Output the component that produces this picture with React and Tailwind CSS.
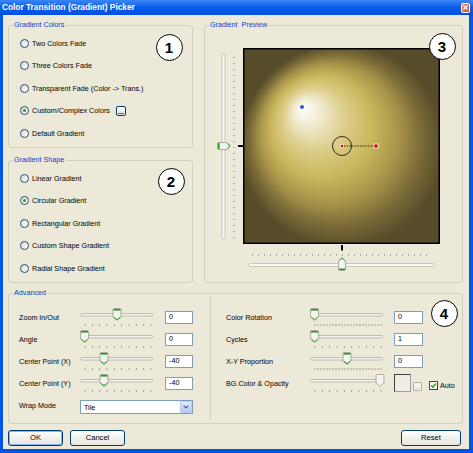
const GREEN = '#21A121'

function Radio({ checked }) {
  return (
    <span className="w-[9px] h-[9px] rounded-full border border-[#1C5180] bg-gradient-to-br from-[#DCDCD3] to-white flex items-center justify-center shrink-0">
      {checked && <span className="w-[3px] h-[3px] rounded-full bg-[#21A121]" />}
    </span>
  )
}

function RadioRow({ label, checked, children }) {
  return (
    <div className="h-[22.5px] flex items-center pl-[11px] gap-[3px]">
      <Radio checked={checked} />
      <span>{label}</span>
      {children}
    </div>
  )
}

function Group({ title, className = '', children }) {
  return (
    <fieldset className={`border border-[#D0D0BF] rounded-[3px] ${className}`}>
      <legend className="ml-[4px] px-[1px] text-[#0046D5] leading-[10px]">{title}</legend>
      {children}
    </fieldset>
  )
}

function Badge({ n, className }) {
  return (
    <div
      className={`absolute w-[27px] h-[27px] rounded-full bg-white border-[1.5px] border-black flex items-center justify-center text-[15px] font-bold leading-none ${className}`}
    >
      {n}
    </div>
  )
}

function ThumbDown({ x, green = true }) {
  return (
    <g transform={`translate(${x - 4.5},2)`}>
      <path
        d="M0.5,1.5 Q0.5,0.5 1.5,0.5 H7.5 Q8.5,0.5 8.5,1.5 V9 L4.5,12.5 L0.5,9 Z"
        fill="#F4F3EE"
        stroke="#9A9A94"
        strokeWidth="0.8"
      />
      {green && <rect x="1" y="1" width="7" height="1.6" fill={GREEN} />}
      {green && <path d="M1.3,9.2 L4.5,11.7 L7.7,9.2" fill="none" stroke={GREEN} strokeWidth="1" />}
    </g>
  )
}

function HSlider({ thumb, ticks = 10, green = true }) {
  const t = []
  for (let i = 0; i < ticks; i++) t.push(5 + (66 / (ticks - 1)) * i)
  return (
    <svg width="73" height="22" className="shrink-0 overflow-visible">
      <rect x="0.5" y="7.5" width="72" height="2.5" rx="1" fill="#F2F2EE" stroke="#ACA899" strokeWidth="0.7" />
      {t.map((x, i) => (
        <rect key={i} x={x - 0.4} y="18" width="0.8" height="2" fill="#8E8E86" />
      ))}
      <ThumbDown x={thumb} green={green} />
    </svg>
  )
}

function TextBox({ value }) {
  return (
    <div className="h-[13px] border border-[#7F9DB9] bg-white flex items-center pl-[3px] leading-none shrink-0 w-full">
      {value}
    </div>
  )
}

function XpButton({ label, def, className = '' }) {
  return (
    <button
      className={`h-[16px] rounded-[3px] border border-[#003C74] bg-gradient-to-b from-white to-[#E6E5DC] flex items-center justify-center leading-none text-[7.6px] ${
        def ? 'shadow-[inset_0_0_0_1px_#8CB4F2]' : ''
      } ${className}`}
    >
      {label}
    </button>
  )
}

function VerticalSlider() {
  const t = []
  for (let y = 9; y <= 189; y += 6) t.push(y)
  return (
    <svg width="30" height="196" className="shrink-0">
      <rect x="9" y="6" width="3" height="185" rx="1" fill="#F7F7F4" stroke="#B9B6A8" strokeWidth="0.7" />
      {t.map((y) => (
        <rect key={y} x="20" y={y} width="2" height="0.8" fill="#9A9A92" />
      ))}
      <g transform="translate(4,94)">
        <path d="M0.5,1.5 Q0.5,0.5 1.5,0.5 H10 L13.5,4 L10,7.5 H1.5 Q0.5,7.5 0.5,6.5 Z" fill="#F4F3EE" stroke="#9A9A94" strokeWidth="0.8" />
        <rect x="1" y="1" width="1.6" height="6" fill={GREEN} />
        <path d="M10.2,1.3 L12.7,4 L10.2,6.7" fill="none" stroke={GREEN} strokeWidth="1" />
      </g>
      <rect x="25" y="97" width="5" height="2" fill="#000" />
    </svg>
  )
}

function BottomSlider() {
  const t = []
  for (let x = 9; x <= 188; x += 6) t.push(x)
  return (
    <svg width="197" height="30" className="block">
      <rect x="98" y="1" width="2" height="5.5" fill="#000" />
      {t.map((x) => (
        <rect key={x} x={x} y="10" width="0.8" height="2" fill="#9A9A92" />
      ))}
      <rect x="6" y="19.5" width="185" height="3" rx="1" fill="#F7F7F4" stroke="#B9B6A8" strokeWidth="0.7" />
      <g transform="translate(95,13)">
        <path d="M0.5,4 L4,0.5 L7.5,4 V12.5 Q7.5,13.5 6.5,13.5 H1.5 Q0.5,13.5 0.5,12.5 Z" fill="#F4F3EE" stroke="#9A9A94" strokeWidth="0.8" />
        <rect x="1" y="11.5" width="6" height="1.6" fill={GREEN} />
        <path d="M1.2,3.8 L4,1.2 L6.8,3.8" fill="none" stroke={GREEN} strokeWidth="0.8" />
      </g>
    </svg>
  )
}

function Preview() {
  return (
    <svg width="197" height="196" className="shrink-0 block">
      <defs>
        <radialGradient id="g" gradientUnits="userSpaceOnUse" cx="99" cy="98" r="102" fx="59" fy="59">
          <stop offset="0" stopColor="#FFFFFF" />
          <stop offset="0.1" stopColor="#F4F0DD" />
          <stop offset="0.3" stopColor="#DDCF8C" />
          <stop offset="0.5" stopColor="#C9B75C" />
          <stop offset="0.68" stopColor="#A8954A" />
          <stop offset="0.84" stopColor="#7A6B38" />
          <stop offset="1" stopColor="#574C2A" />
        </radialGradient>
      </defs>
      <rect x="0" y="0" width="197" height="196" fill="url(#g)" />
      <rect x="0.75" y="0.75" width="195.5" height="194.5" fill="none" stroke="#000" strokeWidth="1.5" />
      <circle cx="59" cy="59" r="2" fill="#2A5CC8" />
      <circle cx="99" cy="98" r="9.5" fill="none" stroke="#000" strokeWidth="0.8" />
      <line x1="101" y1="98" x2="131" y2="98" stroke="#000" strokeWidth="0.8" strokeDasharray="1.5 1.2" />
      <rect x="97.5" y="96.5" width="3" height="3" fill="#E00000" stroke="#fff" strokeWidth="0.6" />
      <rect x="131" y="96" width="4" height="4" fill="#D00000" stroke="#fff" strokeWidth="0.8" />
    </svg>
  )
}

function AdvRow({ label, children, labelW }) {
  return (
    <div className="h-[22px] flex items-center">
      <span className={`${labelW} shrink-0`}>{label}</span>
      {children}
    </div>
  )
}

export default function App() {
  return (
    <div className="w-[473px] h-[453px] bg-[#0055E5] flex flex-col relative font-['Liberation_Sans',Arial,sans-serif] text-[7.2px] leading-[9px] text-black select-none">
      <div className="h-[15px] shrink-0 bg-gradient-to-b from-[#3A86F4] via-[#0A5CEB] to-[#0350DE] flex items-center pl-[2px] pr-[3px]">
        <span className="text-white font-bold text-[8.3px] flex-1">Color Transition (Gradient) Picker</span>
        <span className="w-[9px] h-[10px] rounded-[2px] border border-white bg-gradient-to-br from-[#F08A6C] to-[#D8401F] flex items-center justify-center">
          <svg width="5" height="5" viewBox="0 0 5 5">
            <path d="M0.5,0.5 L4.5,4.5 M4.5,0.5 L0.5,4.5" stroke="#fff" strokeWidth="1.2" />
          </svg>
        </span>
      </div>

      <div className="flex-1 ml-[3px] mr-[4px] mb-[4px] bg-[#ECE9D8] pt-[5px] pl-[5px] pr-[6px] flex flex-col">
        <div className="flex gap-[11px] h-[263px]">
          <div className="w-[185px] flex flex-col gap-[7px]">
            <Group title="Gradient Colors" className="h-[128px]">
              <div className="pt-[2px]">
                <RadioRow label="Two Colors Fade" />
                <RadioRow label="Three Colors Fade" />
                <RadioRow label="Transparent Fade (Color -> Trans.)" />
                <RadioRow label="Custom/Complex Colors" checked>
                  <span className="ml-[3px] w-[10px] h-[10px] rounded-[2px] border border-[#003C74] bg-gradient-to-b from-white to-[#E3E3DB] flex items-end justify-center text-[7px] leading-[6px] font-bold">
                    ...
                  </span>
                </RadioRow>
                <RadioRow label="Default Gradient" />
              </div>
            </Group>
            <Group title="Gradient Shape" className="h-[128px]">
              <div className="pt-[2px]">
                <RadioRow label="Linear Gradient" />
                <RadioRow label="Circular Gradient" checked />
                <RadioRow label="Rectangular Gradient" />
                <RadioRow label="Custom Shape Gradient" />
                <RadioRow label="Radial Shape Gradient" />
              </div>
            </Group>
          </div>
          <Group title={'Gradient\u00a0 Preview'} className="flex-1 h-[263px]">
            <div className="flex pl-[8px] pt-[18px]">
              <VerticalSlider />
              <Preview />
            </div>
            <div className="pl-[38px]">
              <BottomSlider />
            </div>
          </Group>
        </div>

        <Group title="Advanced" className="mt-[5px] h-[136px]">
          <div className="flex h-[125px]">
            <div className="w-[201px] pl-[10px] pt-[8px] shrink-0">
              <AdvRow label="Zoom In/Out" labelW="w-[61px]">
                <HSlider thumb={37} />
                <div className="ml-[12px] w-[28px]"><TextBox value="0" /></div>
              </AdvRow>
              <AdvRow label="Angle" labelW="w-[61px]">
                <HSlider thumb={4.5} />
                <div className="ml-[12px] w-[28px]"><TextBox value="0" /></div>
              </AdvRow>
              <AdvRow label="Center Point (X)" labelW="w-[61px]">
                <HSlider thumb={24} />
                <div className="ml-[12px] w-[28px]"><TextBox value="-40" /></div>
              </AdvRow>
              <AdvRow label="Center Point (Y)" labelW="w-[61px]">
                <HSlider thumb={24} />
                <div className="ml-[12px] w-[28px]"><TextBox value="-40" /></div>
              </AdvRow>
              <AdvRow label="Wrap Mode" labelW="w-[61px]">
                <div className="mt-[4px] w-[113px] h-[14px] border border-[#7F9DB9] bg-white flex items-center">
                  <span className="flex-1 pl-[3px]">Tile</span>
                  <span className="w-[12px] h-[12px] mr-[0.5px] rounded-[1px] border border-[#B9CBF3] bg-gradient-to-b from-[#E2EBFE] to-[#B5C9F6] flex items-center justify-center">
                    <svg width="6" height="4" viewBox="0 0 6 4">
                      <path d="M0.7,0.7 L3,3 L5.3,0.7" fill="none" stroke="#4D6185" strokeWidth="1.2" />
                    </svg>
                  </span>
                </div>
              </AdvRow>
            </div>
            <div className="w-px bg-[#D0D0BF] shrink-0 mt-[-2px] mb-[3px]" />
            <div className="flex-1 pl-[15px] pt-[8px]">
              <AdvRow label="Color Rotation" labelW="w-[84px]">
                <HSlider thumb={4.5} ticks={23} />
                <div className="ml-[11px] w-[29px]"><TextBox value="0" /></div>
              </AdvRow>
              <AdvRow label="Cycles" labelW="w-[84px]">
                <HSlider thumb={4.5} />
                <div className="ml-[11px] w-[29px]"><TextBox value="1" /></div>
              </AdvRow>
              <AdvRow label="X-Y Proportion" labelW="w-[84px]">
                <HSlider thumb={37} ticks={23} />
                <div className="ml-[11px] w-[29px]"><TextBox value="0" /></div>
              </AdvRow>
              <AdvRow label="BG.Color & Opacity" labelW="w-[84px]">
                <HSlider thumb={70} green={false} />
                <div className="ml-[11px] w-[17px] h-[18px] border border-[#404040] border-r-[#A0A0A0] border-b-[#A0A0A0] bg-[#EFECE2] shrink-0" />
                <span className="ml-[2px] mt-[7px] w-[9px] h-[9px] rounded-[1px] border border-[#B0B0A8] bg-[#F2F1EA] flex items-end justify-center text-[6px] leading-[5px] text-[#909088]">
                  ...
                </span>
                <span className="ml-[7px] mt-[5px] w-[9px] h-[9px] border border-[#1C5180] bg-white flex items-center justify-center shrink-0">
                  <svg width="7" height="7" viewBox="0 0 7 7">
                    <path d="M1,3.5 L2.8,5.3 L6,1.5" fill="none" stroke={GREEN} strokeWidth="1.4" />
                  </svg>
                </span>
                <span className="ml-[2px] mt-[5px]">Auto</span>
              </AdvRow>
            </div>
          </div>
        </Group>

        <div className="flex mt-[6px]">
          <XpButton label="OK" def className="w-[55px]" />
          <XpButton label="Cancel" className="w-[55px] ml-[7px]" />
          <XpButton label="Reset" className="w-[60px] ml-auto mr-[2px]" />
        </div>
      </div>

      <Badge n="1" className="left-[155.5px] top-[33.5px]" />
      <Badge n="2" className="left-[157.5px] top-[167.5px]" />
      <Badge n="3" className="left-[428.5px] top-[32.5px]" />
      <Badge n="4" className="left-[430.5px] top-[299.5px]" />
    </div>
  )
}
